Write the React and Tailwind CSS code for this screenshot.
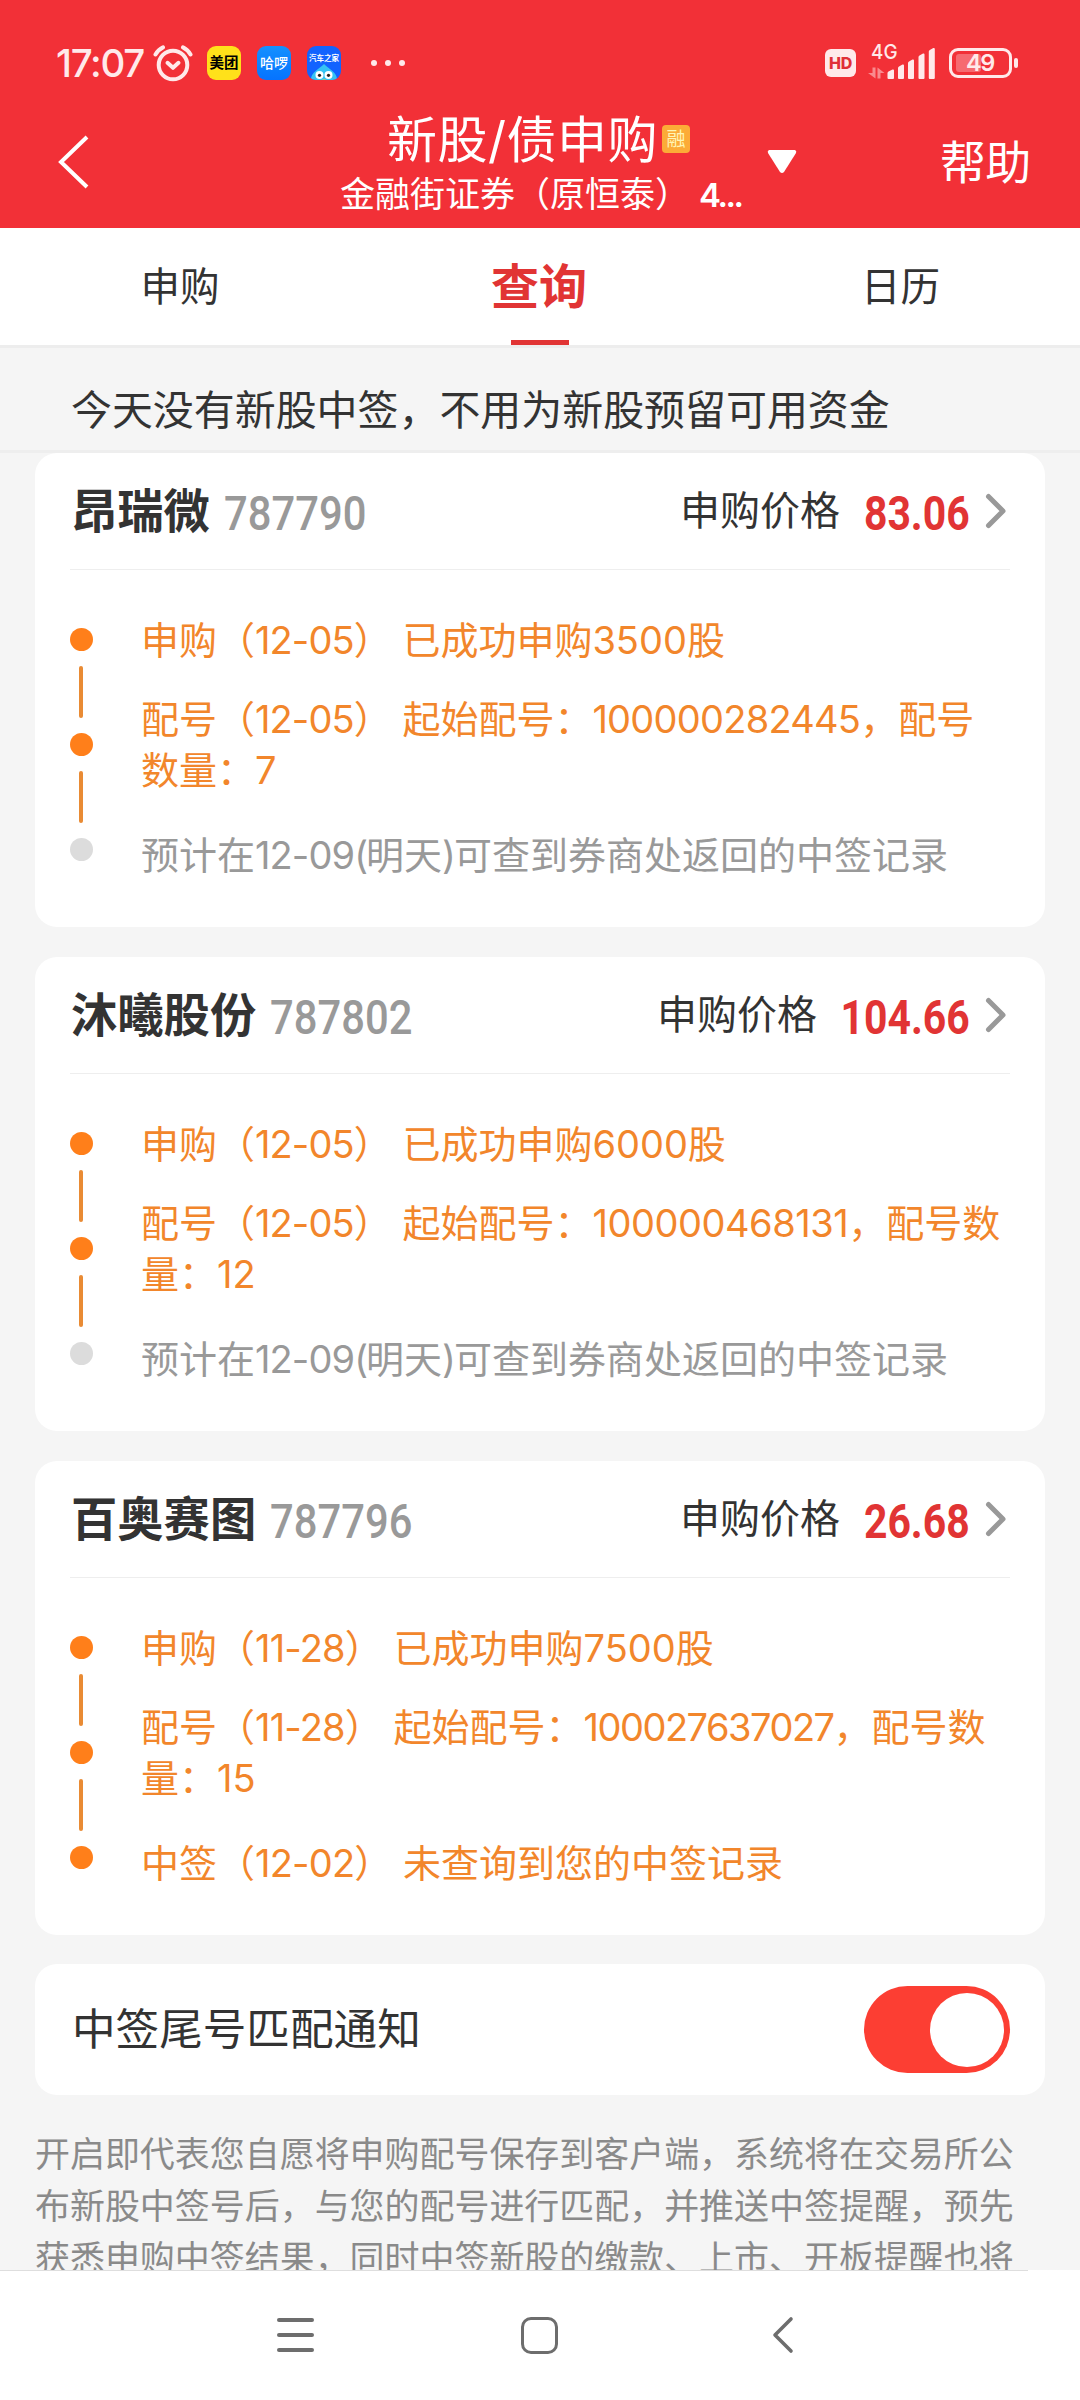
import React from "react";

const FONT = "font-['Inter','Noto_Sans_CJK_SC',sans-serif]";

const cards = [
  {
    name: "昂瑞微",
    code: "787790",
    price: "83.06",
    priceWidth: "w-[105px]",
    serialTracking: "tracking-[-0.75px]",
    dateTracking: "tracking-[-0.9px]",
    gap: "mt-0",
    steps: [
      { lines: ["申购（12-05） 已成功申购3500股"], done: true },
      { lines: ["配号（12-05） 起始配号：100000282445，配号", "数量：7"], done: true },
      { lines: ["预计在12-09(明天)可查到券商处返回的中签记录"], done: false },
    ],
  },
  {
    name: "沐曦股份",
    code: "787802",
    price: "104.66",
    priceWidth: "w-[128px]",
    serialTracking: "tracking-[-0.45px]",
    dateTracking: "tracking-[-0.9px]",
    gap: "mt-[30px]",
    steps: [
      { lines: ["申购（12-05） 已成功申购6000股"], done: true },
      { lines: ["配号（12-05） 起始配号：100000468131，配号数", "量：12"], done: true },
      { lines: ["预计在12-09(明天)可查到券商处返回的中签记录"], done: false },
    ],
  },
  {
    name: "百奥赛图",
    code: "787796",
    price: "26.68",
    priceWidth: "w-[105px]",
    serialTracking: "tracking-[-1.5px]",
    dateTracking: "tracking-[-0.8px]",
    gap: "mt-[30px]",
    steps: [
      { lines: ["申购（11-28） 已成功申购7500股"], done: true },
      { lines: ["配号（11-28） 起始配号：100027637027，配号数", "量：15"], done: true },
      { lines: ["中签（12-02） 未查询到您的中签记录"], done: true },
    ],
  },
];

function AlarmIcon() {
  return (
    <svg className="ml-[6px] h-[37px] w-[40px]" viewBox="0 0 40 37" fill="none" stroke="#ffe9ea" strokeWidth="4">
      <circle cx="20" cy="20" r="14.3" />
      <path d="M14.5 17.8 20 22.8l5.5-5" strokeLinecap="round" strokeLinejoin="round" />
      <path d="M2.5 9.5C4.5 6 7 3.8 10 2.4M37.5 9.5C35.500 6 33 3.800 30 2.400" strokeLinecap="round" />
    </svg>
  );
}

function CarMascot() {
  return (
    <svg className="mx-auto block h-[17px] w-[28px]" viewBox="0 0 28 17">
      <path d="M1 17C0 9 8 6 14 0c6 6 14 9 13 17z" fill="#35c3f3" />
      <circle cx="9.500" cy="11" r="4" fill="#fff" />
      <circle cx="18.500" cy="11" r="4" fill="#fff" />
      <circle cx="9.500" cy="11.300" r="1.600" fill="#222" />
      <circle cx="18.500" cy="11.300" r="1.600" fill="#222" />
      <path d="M11 17c1-2 5-2 6 0z" fill="#ffc928" />
    </svg>
  );
}

function Signal() {
  return (
    <svg className="ml-[12px] h-[37px] w-[67px] overflow-visible" viewBox="0 0 67 37">
      <text x="3" y="17.200" fontFamily="Inter" fontSize="20.500" fontWeight="500" fill="#ffe9ea" textLength="26.500" lengthAdjust="spacingAndGlyphs">
        4G
      </text>
      <g fill="#f98a8e">
        <path d="M4.500 25.500h3v11L0 31h4.500zM9.500 36.500v-11l7 5.500h-4v5.500z" />
      </g>
      <g fill="#ffe9ea">
        <path d="M19.500 31q0-1 1-1.500l4-2q1.500-.5 1.500 1V36q0 1-1 1h-4.500q-1 0-1-1z" />
        <path d="M30 26q0-1 1-1.500l3.500-2q1.500-.5 1.500 1V36q0 1-1 1h-4q-1 0-1-1z" />
        <path d="M40 21q0-1 1-1.500l3.500-2q1.500-.5 1.500 1V36q0 1-1 1h-4q-1 0-1-1z" />
        <path d="M50.500 15q0-1 1-1.500l3.500-2q1.500-.5 1.500 1V36q0 1-1 1h-4q-1 0-1-1z" />
        <path d="M60.800 9.500q0-1 1-1.500l3.500-2q1.500-.5 1.500 1V36q0 1-1 1h-4q-1 0-1-1z" />
      </g>
    </svg>
  );
}

function StatusBar() {
  return (
    <div className="flex h-[100px] items-start pl-[56px] pr-[62px]">
      <span className="mt-[45px] w-[91px] whitespace-nowrap text-[38.5px] font-medium leading-[36px] tracking-[-1.3px] text-[#ffe9ea]">17:07</span>
      <div className="mt-[45px]">
        <AlarmIcon />
      </div>
      <div className="ml-[14px] mt-[46px] flex h-[34px] w-[34px] items-center justify-center rounded-[9px] bg-[#ffe11a] text-[14.500px] font-bold leading-none text-black">美团</div>
      <div className="ml-[16px] mt-[46px] flex h-[34px] w-[34px] items-center justify-center rounded-[9px] bg-gradient-to-b from-[#1690ff] to-[#0673ff] text-[14px] font-medium leading-none text-white">哈啰</div>
      <div className="ml-[16px] mt-[46px] h-[34px] w-[34px] overflow-hidden rounded-[9px] bg-[#1263ff] pt-[8px]">
        <div className="flex h-[10px] justify-center whitespace-nowrap text-[7.500px] font-bold leading-[10px] text-white">汽车之家</div>
        <CarMascot />
      </div>
      <div className="ml-[30px] mt-[60px] flex gap-[8px]">
        <i className="h-[6px] w-[6px] rounded-full bg-[#ffe9ea]" />
        <i className="h-[6px] w-[6px] rounded-full bg-[#ffe9ea]" />
        <i className="h-[6px] w-[6px] rounded-full bg-[#ffe9ea]" />
      </div>
      <div className="ml-auto mt-[49px] flex h-[28px] w-[31px] items-center justify-center rounded-[6px] bg-[#ffe9ea] text-[16px] font-extrabold leading-none tracking-[-0.3px] text-[#e02f37]">HD</div>
      <div className="mt-[42px]">
        <Signal />
      </div>
      <div className="ml-[14px] mt-[48px] flex h-[30px] w-[63px] items-center rounded-[9px] border-[3px] border-[#ffe9ea] pl-[4px]">
        <div className="h-[18px] w-[25px] rounded-[3px] bg-[#f66a70]" />
        <span className="-ml-[15px] text-[23.500px] font-semibold leading-[24px] tracking-[-1.5px] text-[#ffe9ea]">49</span>
      </div>
      <div className="ml-[2px] mt-[58px] h-[10px] w-[4px] rounded-[2px] bg-[#ffe9ea]" />
    </div>
  );
}

function Header() {
  return (
    <div className="h-[228px] bg-[#f23037]">
      <StatusBar />
      <div className="flex h-[128px] items-start text-white">
        <svg className="ml-[57px] mt-[34px] h-[56px] w-[32px]" viewBox="0 0 32 56" fill="none" stroke="#fff" strokeWidth="4">
          <path d="M30 3 4 28l26 25" />
        </svg>
        <div className="ml-[252px] w-[410px]">
          <div className="ml-[46px] flex h-[70px] items-start">
            <h1 className="mt-[9px] whitespace-nowrap text-[50px] font-normal leading-[62px] tracking-[0.5px]">新股/债申购</h1>
            <span className="ml-[4px] mt-[25px] flex h-[28px] w-[28px] items-center justify-center rounded-[4px] bg-[#fcab37] text-[19px] leading-none text-[#fff5b5]">融</span>
          </div>
          <div className="-ml-[1px] mt-[4px] whitespace-nowrap text-[35px] leading-[40px]">
            金融街证券（原恒泰）
            <span className="ml-[9px] text-[33px] font-semibold tracking-[-2.500px]">4...</span>
          </div>
        </div>
        <svg className="ml-[16px] mt-[50px] h-[24px] w-[30px]" viewBox="0 0 30 24">
          <path d="M2 0h26q2 1 1 3L17 22q-2 2-4 0L1 3Q0 1 2 0z" fill="#fff" />
        </svg>
        <span className="ml-[143px] mt-[32px] whitespace-nowrap text-[46px] leading-[60px] tracking-[-0.7px]">帮助</span>
      </div>
    </div>
  );
}

function Tabs() {
  return (
    <div className="grid h-[120px] grid-cols-3 border-b-[3px] border-[#ededed] bg-white text-center text-[#333]">
      <div className="pt-[34px] text-[39.500px] leading-[50px]">申购</div>
      <div className="flex flex-col items-center justify-between pt-[34px] text-[48px] font-bold leading-[50px] text-[#e13434]">
        <span className="-ml-[2px]">查询</span>
        <div className="h-[5px] w-[58px] bg-[#e13434]" />
      </div>
      <div className="pl-[1px] pt-[34px] text-[39.500px] leading-[50px]">日历</div>
    </div>
  );
}

function StepLine({ text, card }) {
  const parts = text.split(/(\d{10,}|\d\d-\d\d|[()])/);
  return (
    <div>
      {parts.map((p, i) => {
        if (/^\d{10,}$/.test(p)) return <span key={i} className={card.serialTracking}>{p}</span>;
        if (/^\d\d-\d\d$/.test(p)) return <span key={i} className={card.dateTracking}>{p}</span>;
        if (p === "(" || p === ")") return <span key={i} className="tracking-[-2px]">{p}</span>;
        return p;
      })}
    </div>
  );
}

function Card({ card }) {
  const { name, code, price, priceWidth, gap, steps } = card;
  return (
    <section className={`mx-[35px] h-[474px] rounded-[22px] bg-white px-[35px] ${gap}`}>
      <div className="flex h-[117px] items-center whitespace-nowrap border-b border-[#eee] pl-[1px] pr-[3px]">
        <h2 className="text-[46.300px] font-bold leading-[60px] text-[#333]">{name}</h2>
        <span className="ml-[14px] mt-[5px] inline-block w-[160px] origin-left scale-x-[0.852] font-['Roboto'] text-[49px] font-medium leading-[60px] text-[#999]">{code}</span>
        <span className="ml-auto text-[40px] leading-[60px] text-[#333]">申购价格</span>
        <span className={`ml-[25px] mt-[5px] flex justify-end ${priceWidth}`}>
          <span className="origin-right scale-x-[0.835] font-['Roboto'] text-[49px] font-bold leading-[60px] text-[#e13434]">{price}</span>
        </span>
        <svg className="ml-[15px] h-[36px] w-[22px]" viewBox="0 0 22 36" fill="none" stroke="#999" strokeWidth="5" strokeLinecap="round" strokeLinejoin="round">
          <path d="M3.500 3.500 18 18 3.500 32.500" />
        </svg>
      </div>
      <div className="flex">
        <div className="flex w-[23px] shrink-0 flex-col items-center pt-[58px]">
          {steps.map((s, i) => (
            <React.Fragment key={i}>
              {i > 0 && <div className="my-[15px] mr-[1px] h-[52px] w-[4px] rounded-full bg-[#e98b34]" />}
              <div className={s.done ? "h-[23px] w-[23px] rounded-full bg-[#ff7f1a]" : "h-[23px] w-[23px] rounded-full bg-[#dcdcdc]"} />
            </React.Fragment>
          ))}
        </div>
        <div className="ml-[48px] flex flex-col pt-[45px] text-[38px] leading-[51px]">
          {steps.map((s, i) => (
            <div
              key={i}
              className={`whitespace-nowrap ${s.done ? "text-[#f2862b]" : "text-[#999]"} ${i === 1 ? "mt-[28px]" : i === 2 ? "mt-[34px]" : ""}`}
            >
              {s.lines.map((l) => (
                <StepLine key={l} text={l} card={card} />
              ))}
            </div>
          ))}
        </div>
      </div>
    </section>
  );
}

function NavBar() {
  return (
    <div className="h-[130px] bg-white">
      <div className="h-px w-[1028px] bg-[#dedede]" />
      <div className="flex items-center pl-[277px] pt-[45px]">
        <div className="flex w-[37px] flex-col gap-[11px]">
          <i className="h-[4px] rounded-full bg-[#6d6d6d]" />
          <i className="h-[4px] rounded-full bg-[#6d6d6d]" />
          <i className="h-[4px] rounded-full bg-[#6d6d6d]" />
        </div>
        <div className="ml-[207px] h-[37px] w-[37px] rounded-[10px] border-[3.500px] border-[#6d6d6d]" />
        <svg className="ml-[214px] h-[38px] w-[22px]" viewBox="0 0 22 38" fill="none" stroke="#6d6d6d" strokeWidth="3.600" strokeLinecap="round" strokeLinejoin="round">
          <path d="M19 3 3 19l16 16" />
        </svg>
      </div>
    </div>
  );
}

export default function App() {
  return (
    <div className={`flex h-[2400px] w-[1080px] flex-col overflow-hidden bg-[#f5f5f5] ${FONT}`}>
      <Header />
      <Tabs />
      <div className="h-[105px] whitespace-nowrap border-b-[3px] border-[#eee] pl-[71px] pt-[37px] text-[40.950px] leading-[50px] text-[#333]">今天没有新股中签，不用为新股预留可用资金</div>
      <main className="h-[1817px] shrink-0 overflow-hidden">
        {cards.map((c) => (
          <Card key={c.code} card={c} />
        ))}
        <section className="mx-[35px] mt-[29px] flex h-[131px] items-center justify-between rounded-[22px] bg-white pl-[37px] pr-[35px]">
          <span className="text-[43.600px] leading-[60px] text-[#333]">中签尾号匹配通知</span>
          <button className="flex h-[87px] w-[146px] items-center justify-end rounded-full bg-[#fc3e33] pr-[6px]">
            <span className="h-[74px] w-[74px] rounded-full bg-white" />
          </button>
        </section>
        <div className="mt-[33px] whitespace-nowrap pl-[35px] text-[34.960px] leading-[52px] text-[#8a8a8a]">
          <div>开启即代表您自愿将申购配号保存到客户端，系统将在交易所公</div>
          <div>布新股中签号后，与您的配号进行匹配，并推送中签提醒，预先</div>
          <div>获悉申购中签结果，同时中签新股的缴款、上市、开板提醒也将</div>
        </div>
      </main>
      <NavBar />
    </div>
  );
}
